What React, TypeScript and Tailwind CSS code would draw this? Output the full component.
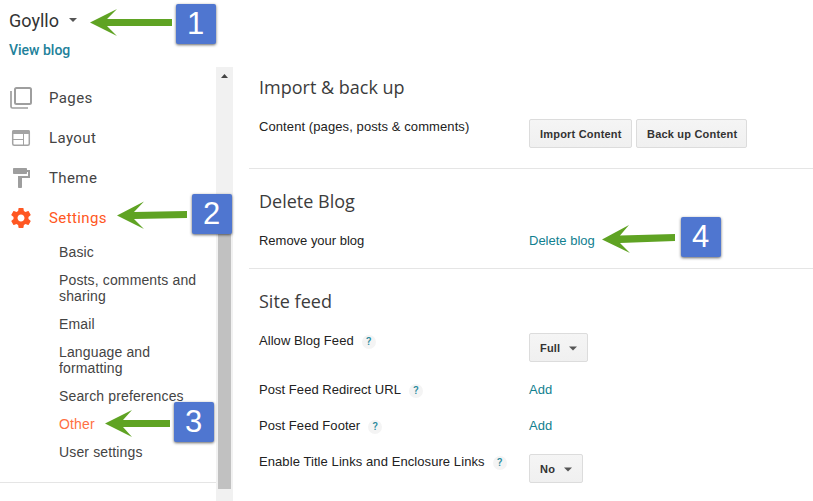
import type { ReactNode } from "react";

const arial = "font-['Liberation_Sans',Arial,sans-serif]";

function Arrow({ points }: { points: string }) {
  return (
    <svg className="pointer-events-none absolute top-0 left-0" width="813" height="501">
      <polygon points={points} fill="#5fa323" />
    </svg>
  );
}

function Badge({ n, place }: { n: number; place: string }) {
  return (
    <div
      className={`absolute flex h-10 w-10 items-center justify-center rounded-[2px] bg-[#4f76d0] pr-px pb-px text-[31px] leading-none text-white shadow-[0_1px_3px_rgba(0,0,0,0.6)] font-['Liberation_Sans',Arial,sans-serif] ${place}`}
    >
      {n}
    </div>
  );
}

function NavItem({ icon, label, active = false }: { icon: ReactNode; label: string; active?: boolean }) {
  return (
    <a className={`flex h-10 items-center pl-[9px] font-[Roboto,sans-serif] text-[15px] tracking-[0.4px] ${active ? "text-[#ff5722]" : "text-[#444]"}`}>
      <span className="flex w-10 shrink-0">{icon}</span>
      {label}
    </a>
  );
}

function SubItem({ label, active = false }: { label: string; active?: boolean }) {
  return (
    <a className={`block py-1.5 text-[14px] leading-4 tracking-[0.14px] whitespace-pre ${active ? "text-[#ff7043]" : "text-[#444]"}`}>{label}</a>
  );
}

function Help() {
  return (
    <span className="mt-0.5 ml-2 flex h-3.5 w-3.5 items-center justify-center rounded-full bg-[#f4f4f4] pb-px font-[Roboto,sans-serif] text-[11px] leading-none font-medium text-[#2a8a9d]">
      ?
    </span>
  );
}

function Row({ label, help = false, spacing = "tracking-[0.05px]", height, children }: { label: string; help?: boolean; spacing?: string; height: string; children: ReactNode }) {
  return (
    <div className={`flex pl-2.5 ${height}`}>
      <div className={`flex h-4 w-[270px] shrink-0 items-center whitespace-nowrap ${spacing}`}>
        {label}
        {help && <Help />}
      </div>
      {children}
    </div>
  );
}

function Heading({ children }: { children: ReactNode }) {
  return <h2 className="pl-2.5 font-['Open_Sans',sans-serif] text-[18px] leading-6 font-normal text-[#3c3c3c]">{children}</h2>;
}

function Button({ label, size, caret = false }: { label: string; size: string; caret?: boolean }) {
  return (
    <button className={`flex h-[29px] shrink-0 items-center rounded-[2px] border border-[#dcdcdc] bg-linear-to-b from-[#f5f5f5] to-[#f0f0f0] pt-0.5 pl-2.5 text-[11px] font-bold whitespace-nowrap text-[#333] tracking-[0.2px] ${size}`}>
      {label}
      {caret && (
        <svg className="ml-[9px]" width="8" height="5" viewBox="0 0 8 5">
          <path d="M0 0.5H8L4 4.5Z" fill="#555" />
        </svg>
      )}
    </button>
  );
}

function Link({ children }: { children: ReactNode }) {
  return <a className="h-4 leading-4 text-[#11808f]">{children}</a>;
}

const pages = (
  <svg width="24" height="24" viewBox="0 0 24 24" fill="none" stroke="#9e9e9e">
    <rect x="6" y="2" width="16" height="16" rx="1.5" strokeWidth="2" />
    <path d="M2 5V20.500Q2 22 3.500 22H19" strokeWidth="1.700" />
  </svg>
);
const layout = (
  <svg width="24" height="24" viewBox="0 0 24 24" fill="none" stroke="#a3a3a3">
    <path d="M3 8V6Q3 4 5 4H19Q21 4 21 6V8Z" fill="#a3a3a3" stroke="none" />
    <rect x="3.700" y="4.700" width="16.600" height="14.600" rx="1.500" strokeWidth="1.500" />
    <path d="M4 13.500H14M14.500 8V19" strokeWidth="1" />
  </svg>
);
const roller = (
  <svg width="24" height="24" viewBox="0 0 24 24" fill="#9e9e9e">
    <path d="M18 4V3c0-.55-.45-1-1-1H5c-.55 0-1 .45-1 1v4c0 .55.45 1 1 1h12c.55 0 1-.45 1-1V6h1v4H9v11c0 .55.45 1 1 1h2c.55 0 1-.45 1-1v-9h8V4h-3z" />
  </svg>
);
const gear = (
  <svg width="24" height="24" viewBox="0 0 24 24" fill="#ff5722">
    <path d="M19.430 12.980c.04-.32.07-.64.07-.98s-.03-.66-.07-.98l2.110-1.650c.19-.15.24-.42.12-.64l-2-3.460c-.12-.22-.39-.3-.61-.22l-2.490 1c-.52-.4-1.080-.73-1.690-.98l-.38-2.650C14.460 2.180 14.250 2 14 2h-4c-.25 0-.46.18-.49.42l-.38 2.650c-.61.25-1.170.59-1.690.98l-2.490-1c-.23-.09-.49 0-.61.22l-2 3.460c-.13.22-.07.49.12.64l2.110 1.650c-.04.32-.07.65-.07.98s.03.66.07.98l-2.110 1.650c-.19.15-.24.42-.12.64l2 3.460c.12.22.39.3.61.22l2.490-1c.52.4 1.080.73 1.690.98l.38 2.650c.03.24.24.42.49.42h4c.25 0 .46-.18.49-.42l.38-2.650c.61-.25 1.170-.59 1.690-.98l2.490 1c.23.09.49 0 .61-.22l2-3.460c.12-.22.07-.49-.12-.64l-2.110-1.650zM12 15.500c-1.930 0-3.500-1.570-3.500-3.500s1.570-3.500 3.500-3.500 3.500 1.570 3.500 3.500-1.570 3.500-3.500 3.500z" />
  </svg>
);

export default function App() {
  return (
    <div className={`relative flex h-[501px] w-[813px] flex-col overflow-hidden bg-white text-[13px] text-[#222] ${arial}`}>
      <header className="h-[67px] shrink-0 pl-[9px] font-[Roboto,sans-serif]">
        <div className="flex h-10 items-center text-[18px] text-[#333]">
          Goyllo
          <svg className="ml-[10px]" width="8" height="4" viewBox="0 0 8 4">
            <path d="M0 0H8L4 4Z" fill="#555" />
          </svg>
        </div>
        <a className="block h-5 text-[14px] leading-5 font-medium text-[#22819a]">View blog</a>
      </header>
      <div className="flex min-h-0 flex-1">
        <nav className="w-[216px] shrink-0 pt-[11px]">
          <NavItem icon={pages} label="Pages" />
          <NavItem icon={layout} label="Layout" />
          <NavItem icon={roller} label="Theme" />
          <NavItem icon={gear} label="Settings" active />
          <div className="h-[245px] border-b border-[#e5e5e5] pl-[59px]">
            <SubItem label="Basic" />
            <SubItem label={"Posts, comments and\nsharing"} />
            <SubItem label="Email" />
            <SubItem label={"Language and\nformatting"} />
            <SubItem label="Search preferences" />
            <SubItem label="Other" active />
            <SubItem label="User settings" />
          </div>
        </nav>
        <div className="flex w-[17px] shrink-0 flex-col items-center bg-[#f1f1f1] pt-[7px]">
          <svg width="7" height="4" viewBox="0 0 7 4">
            <path d="M0 4L3.500 0L7 4Z" fill="#444" />
          </svg>
          <div className="mt-[133px] h-[278px] w-[13px] bg-[#c1c1c1]" />
        </div>
        <main className="ml-4 flex-1">
          <section className="h-[102px] border-b border-[#e5e5e5] pt-2">
            <Heading>Import &amp; back up</Heading>
            <Row label="Content (pages, posts & comments)" spacing="tracking-[0.09px]" height="mt-5">
              <div className="flex gap-1">
                <Button label="Import Content" size="w-[103px]" />
                <Button label="Back up Content" size="w-[111px]" />
              </div>
            </Row>
          </section>
          <section className="h-[100px] border-b border-[#e5e5e5] pt-5">
            <Heading>Delete Blog</Heading>
            <Row label="Remove your blog" spacing="tracking-[-0.02px]" height="mt-5">
              <Link>Delete blog</Link>
            </Row>
          </section>
          <section className="pt-5">
            <Heading>Site feed</Heading>
            <Row label="Allow Blog Feed" help height="mt-5 h-[49px]">
              <Button label="Full" size="w-[59px]" caret />
            </Row>
            <Row label="Post Feed Redirect URL" help height="h-9">
              <Link>Add</Link>
            </Row>
            <Row label="Post Feed Footer" help height="h-9">
              <Link>Add</Link>
            </Row>
            <Row label="Enable Title Links and Enclosure Links" spacing="tracking-[0.08px]" help height="h-10">
              <Button label="No" size="w-[54px]" caret />
            </Row>
          </section>
        </main>
      </div>
      <Arrow points="90,22.500 117,9 107,19 172,19 172,26 107,26 117,36" />
      <Arrow points="117,215.500 144,201.500 134,212 187,211 187,218 134,219 144,229" />
      <Arrow points="105,423.500 132,410 123,420 170,420 170,427 123,427 132,437" />
      <Arrow points="602,239.500 629,225 620,235.500 675,234 675,241 620,243 630,253" />
      <Badge n={1} place="top-1 left-44" />
      <Badge n={2} place="top-[194px] left-48" />
      <Badge n={3} place="top-[402px] left-[174px]" />
      <Badge n={4} place="top-[217px] left-[681px]" />
    </div>
  );
}
